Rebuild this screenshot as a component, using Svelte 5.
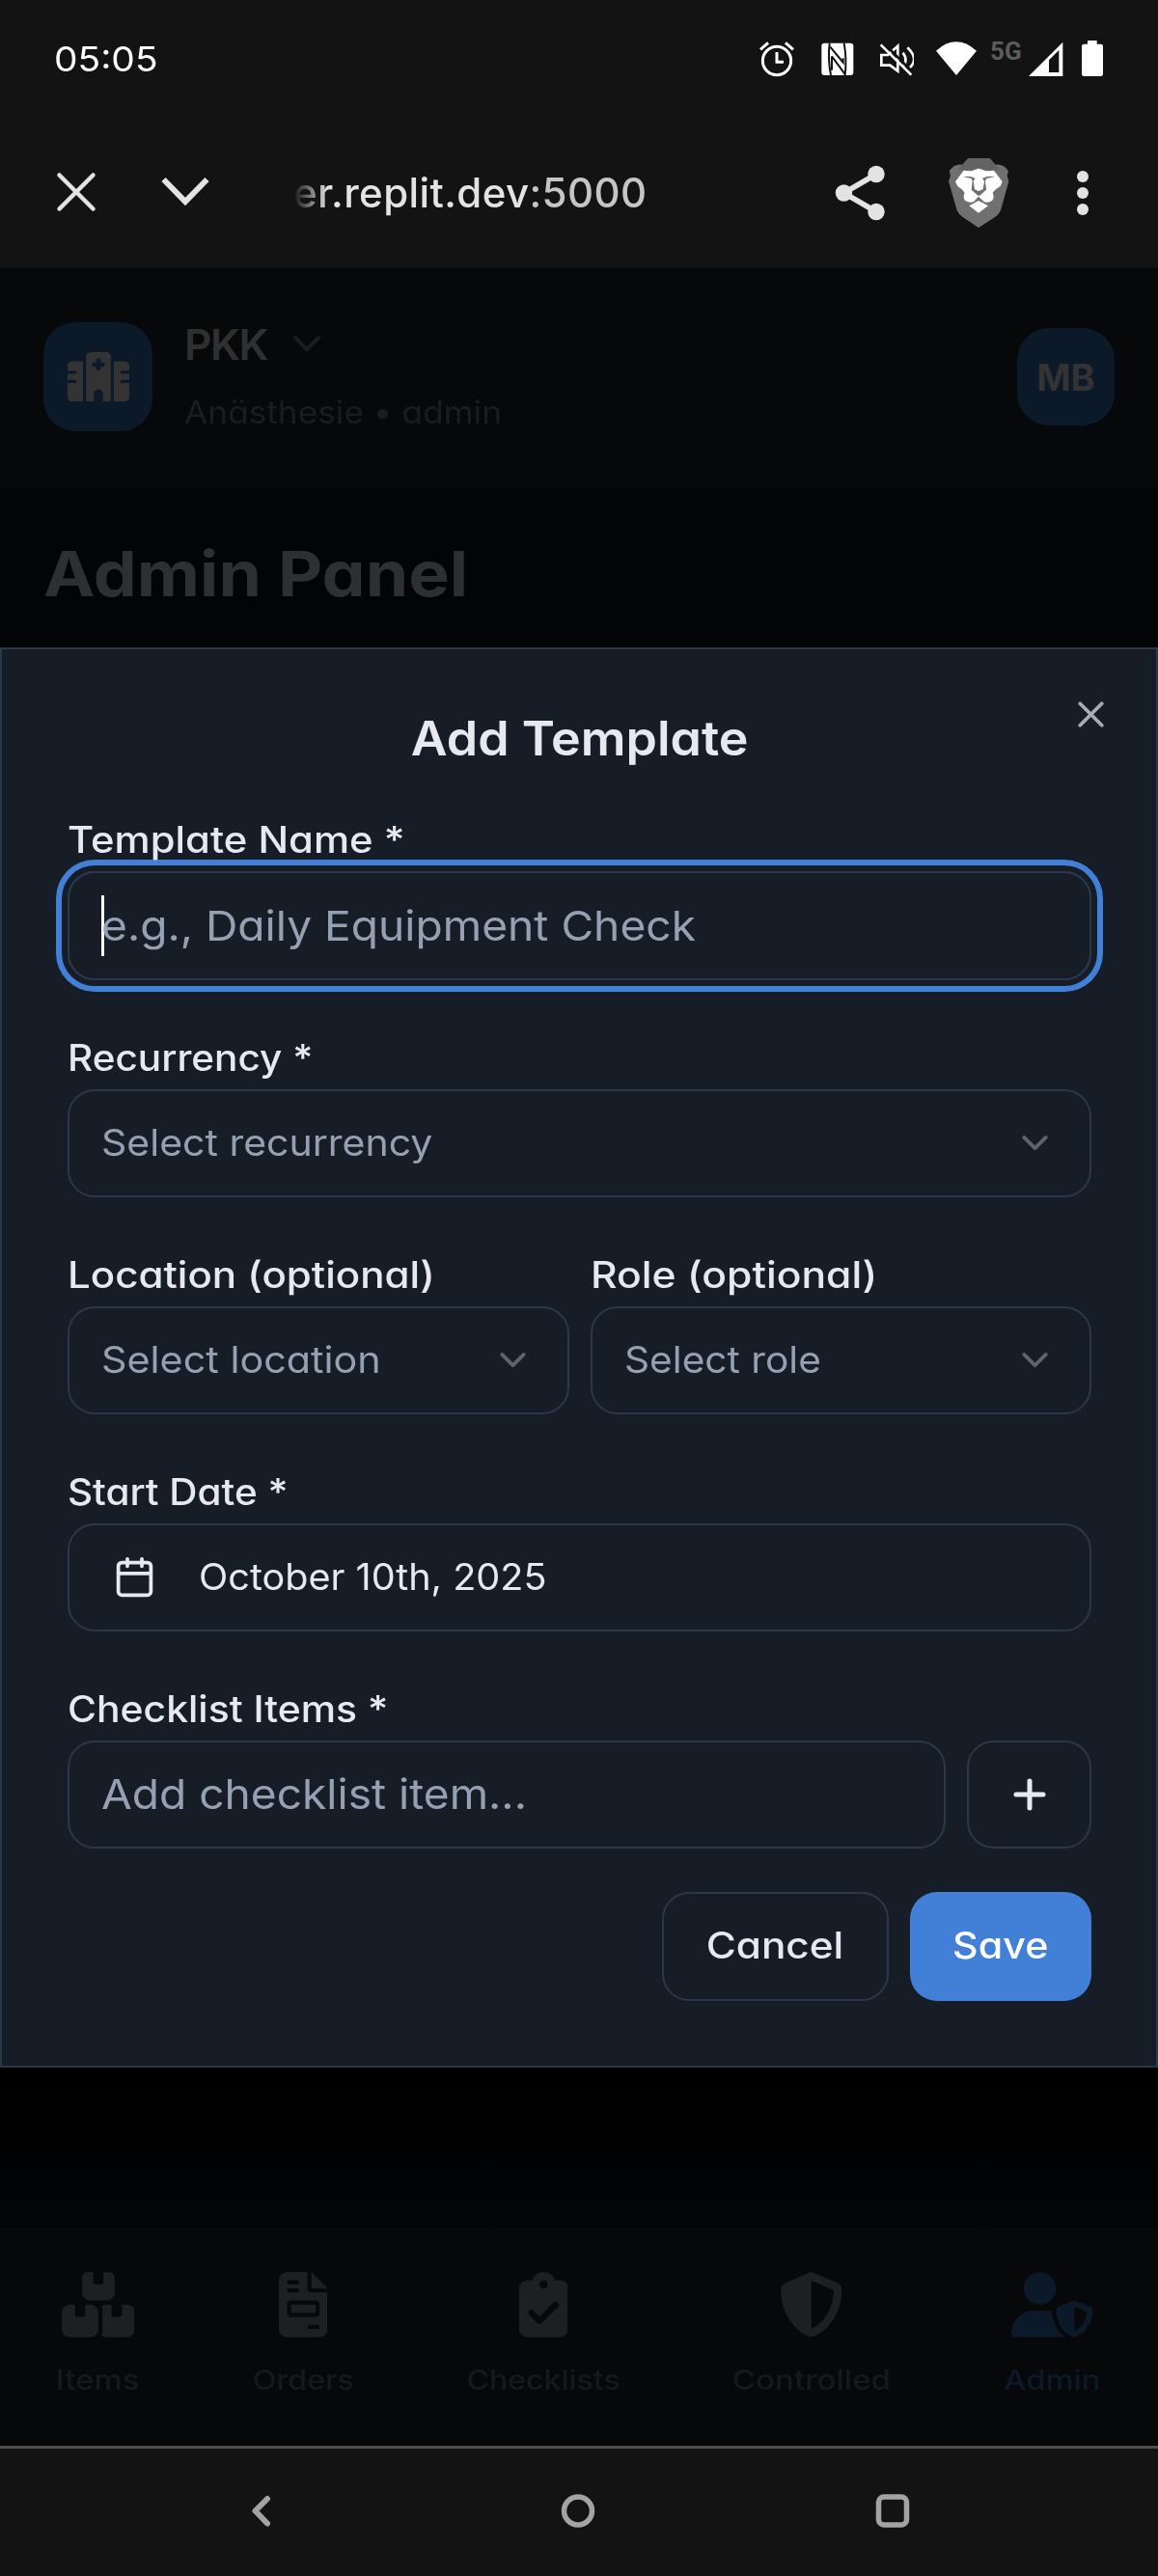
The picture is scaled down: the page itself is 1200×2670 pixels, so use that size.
<script>
  const navItems = [
    {
      label: 'Items', width: 576, span: 84, stretch: 1.135,
      path: 'M248 0H208c-26.5 0-48 21.5-48 48V160c0 35.3 28.7 64 64 64H352c35.3 0 64-28.7 64-64V48c0-26.5-21.5-48-48-48H328V80c0 8.8-7.2 16-16 16H264c-8.8 0-16-7.2-16-16V0zM64 256c-35.3 0-64 28.7-64 64V448c0 35.3 28.7 64 64 64H224c35.3 0 64-28.7 64-64V320c0-35.3-28.7-64-64-64H184v80c0 8.8-7.2 16-16 16H120c-8.8 0-16-7.2-16-16V256H64zM352 512H512c35.3 0 64-28.7 64-64V320c0-35.3-28.7-64-64-64H472v80c0 8.8-7.2 16-16 16H408c-8.8 0-16-7.2-16-16V256H352c-15 0-28.8 5.1-39.7 13.8c4.9 10.4 7.7 22 7.7 34.2V464c0 12.2-2.8 23.8-7.7 34.2C323.2 506.9 337 512 352 512z'
    },
    {
      label: 'Orders', width: 384, span: 103, stretch: 1.11,
      path: 'M64 0C28.7 0 0 28.7 0 64V448c0 35.3 28.7 64 64 64H320c35.3 0 64-28.7 64-64V160H256c-17.7 0-32-14.3-32-32V0H64zM256 0V128H384L256 0zM80 64h64c8.8 0 16 7.2 16 16s-7.2 16-16 16H80c-8.8 0-16-7.2-16-16s7.2-16 16-16zm0 64h64c8.8 0 16 7.2 16 16s-7.2 16-16 16H80c-8.8 0-16-7.2-16-16s7.2-16 16-16zm16 96H288c17.7 0 32 14.3 32 32v64c0 17.7-14.3 32-32 32H96c-17.7 0-32-14.3-32-32V256c0-17.7 14.3-32 32-32zm0 32v64H288V256H96zM240 416h64c8.8 0 16 7.2 16 16s-7.2 16-16 16H240c-8.8 0-16-7.2-16-16s7.2-16 16-16z'
    },
    {
      label: 'Checklists', width: 384, span: 157, stretch: 1.105,
      path: 'M192 0c-41.8 0-77.4 26.7-90.5 64H64C28.7 64 0 92.7 0 128V448c0 35.3 28.7 64 64 64H320c35.3 0 64-28.7 64-64V128c0-35.3-28.7-64-64-64H282.5C269.4 26.7 233.8 0 192 0zm0 64a32 32 0 1 1 0 64 32 32 0 1 1 0-64zM305 273L177 401c-9.4 9.4-24.6 9.4-33.9 0L79 337c-9.4-9.4-9.4-24.6 0-33.9s24.6-9.4 33.9 0l47 47L271 239c9.4-9.4 24.6-9.4 33.9 0s9.4 24.6 0 33.9z'
    },
    {
      label: 'Controlled', width: 512, span: 161, stretch: 1.142,
      path: 'M256 0c4.6 0 9.2 1 13.4 2.9L457.7 82.8c22 9.3 38.4 31 38.3 57.2c-.5 99.2-41.3 280.7-213.6 363.2c-16.7 8-36.1 8-52.8 0C57.3 420.7 16.5 239.2 16 140c-.1-26.2 16.3-47.9 38.3-57.2L242.7 2.9C246.8 1 251.4 0 256 0zm0 66.8V444.8C394 378 431.1 230.1 432 141.4L256 66.8z'
    },
    {
      label: 'Admin', width: 640, span: 100, stretch: 1.13, active: true,
      path: 'M224 256A128 128 0 1 0 224 0a128 128 0 1 0 0 256zm-45.7 48C79.8 304 0 383.8 0 482.3C0 498.7 13.3 512 29.7 512H418.3c1.8 0 3.5-.2 5.3-.5c-76.3-55.1-99.8-141-103.1-200.2c-16.1-4.8-33.1-7.3-50.7-7.3H178.3zm308.8-78.3l-120 48C358 277.4 352 286.2 352 296c0 63.3 25.9 168.8 134.8 214.2c5.9 2.5 12.6 2.5 18.5 0C614.1 464.8 640 359.3 640 296c0-9.8-6-18.6-15.1-22.3l-120-48c-5.7-2.3-12.1-2.3-17.8 0zM591.4 312c-3.9 50.7-27.2 116.7-95.4 149.7V273.8L591.4 312z'
    }
  ];
</script>

<!-- Text widened horizontally by a factor, for the broad geometric look of the typeface -->
{#snippet wide(text, factor)}
  <span class="wide" style:--stretch={factor}>{text}</span>
{/snippet}

{#snippet label(text, factor)}
  <div class="label">{@render wide(text, factor)}</div>
{/snippet}

{#snippet select(text, factor)}
  <div class="control select">
    {@render wide(text, factor)}
    <svg class="lucide dim" viewBox="0 0 24 24"><path d="m6 9 6 6 6-6" /></svg>
  </div>
{/snippet}

<div class="screen">
  <div class="status">
    <span class="time">{@render wide('05:05', 1.08)}</span>
    <svg class="alarm" width="36" height="38" viewBox="141 123 108 114">
      <g fill="none" stroke="#fff" stroke-width="9">
        <circle cx="195" cy="186" r="44" />
        <path d="M195 159V190H216M144 151 168 130M246 151 222 130" />
      </g>
    </svg>
    <svg class="nfc" width="34" height="38" viewBox="331 123 102 114">
      <rect x="332" y="131" width="99" height="100" rx="9" fill="#fff" />
      <path d="M357 131Q351 182 361 231M359 143 399 191V178M364 172 406 229M402 131Q411 182 405 231M364 172V215" fill="none" stroke="#131313" stroke-width="6" />
    </svg>
    <svg class="mute" width="36" height="38" viewBox="511 123 108 114">
      <g fill="none" stroke="#fff" stroke-width="8">
        <path d="M518 168H538L569 140V218L545 200H518ZM585 161Q601 182 587 202M599 145Q636 180 606 208" />
        <path d="M525 131 620 226" stroke="#131313" stroke-width="8" />
        <path d="M516 136 611 230" stroke-width="8" />
      </g>
    </svg>
    <svg class="wifi" width="42" height="38" viewBox="690 123 126 114"><path d="M690 155Q752 99 816 155L753 231Z" fill="#fff" /></svg>
    <span class="net">5G</span>
    <svg class="signal" width="36" height="38" viewBox="977 123 108 114">
      <path d="M977 234 1083 128V234ZM1040 222H1071V153L1040 184Z" fill="#fff" fill-rule="evenodd" />
    </svg>
    <svg class="battery" width="22" height="38" viewBox="1143 123 66 114">
      <rect x="1143" y="134" width="66" height="100" rx="7" fill="#fff" /><rect x="1161" y="123" width="29" height="15" fill="#fff" />
    </svg>
  </div>

  <div class="browser">
    <svg width="44" height="46" viewBox="0 0 44 46"><path d="M4.500 4.500 39.500 39.500M39.500 4.500 4.500 39.500" fill="none" stroke="#e3e3e3" stroke-width="4.500" stroke-linecap="round" /></svg>
    <svg class="down" width="54" height="46" viewBox="0 0 54 46"><path d="M4.500 9 27 32 49.500 9" fill="none" stroke="#e3e3e3" stroke-width="6" /></svg>
    <span class="url">er.replit.dev<span class="port">:5000</span></span>
    <svg width="54" height="60" viewBox="0 0 54 60">
      <g fill="#e3e3e3"><circle cx="43" cy="10.500" r="8.700" /><circle cx="9.500" cy="30" r="8.700" /><circle cx="43" cy="49.500" r="8.700" /></g>
      <path d="M43 10.500 9.500 30 43 49.500" fill="none" stroke="#e3e3e3" stroke-width="5.500" />
    </svg>
    <svg class="brave" width="64" height="74" viewBox="726 487 192 222">
      <path d="M790 490H857L874 510Q900 506 915 530L911 545 916 562 891 652Q886 665 872 674L822 706 774 674Q760 665 755 652L729 562 735 545 731 530Q746 506 772 510Z" fill="#707070" />
      <path d="M790 490H857L874 511 888 524 862 530 822 520 784 530 758 524 772 511Z" fill="#636363" />
      <path d="M776 528 800 530 822 522 845 530 870 528 896 563 890 577Q876 584 866 597 872 612 865 621 850 632 838 624L822 609 808 624Q795 632 780 621 772 612 779 597 770 584 757 577L750 563Z" fill="#fff" />
      <path d="M774 548Q795 542 812 553L806 561 810 587 822 592 836 587 840 561 834 553Q851 542 873 548L846 553 843 562 846 588 826 606H820L800 588 803 562 800 553Z" fill="#707070" />
      <path d="M812 556H834L836 562 834 584 822 592 811 584 808 562Z" fill="#fff" />
      <path d="M793 638 822 622 852 638 822 660Z" fill="#fff" />
    </svg>
    <svg class="dots" width="14" height="48" viewBox="0 0 14 48"><g fill="#e3e3e3"><circle cx="7" cy="7" r="6" /><circle cx="7" cy="24" r="6" /><circle cx="7" cy="41" r="6" /></g></svg>
  </div>

  <header class="top">
    <div class="logo">
      <svg width="64" height="51.200" viewBox="0 0 640 512"><path d="M192 48c0-26.500 21.500-48 48-48H400c26.500 0 48 21.500 48 48V512H368V432c0-26.500-21.500-48-48-48s-48 21.500-48 48v80H192V48zM48 96H160V512H48c-26.500 0-48-21.500-48-48V320H80c8.800 0 16-7.200 16-16s-7.200-16-16-16H0V224H80c8.800 0 16-7.200 16-16s-7.200-16-16-16H0V144c0-26.500 21.500-48 48-48zm544 0c26.500 0 48 21.500 48 48v48H560c-8.800 0-16 7.200-16 16s7.200 16 16 16h80v64H560c-8.800 0-16 7.200-16 16s7.200 16 16 16h80V464c0 26.500-21.500 48-48 48H480V96H592zM312 64c-8.800 0-16 7.200-16 16v24H272c-8.800 0-16 7.200-16 16v16c0 8.800 7.200 16 16 16h24v24c0 8.800 7.200 16 16 16h16c8.800 0 16-7.200 16-16V152h24c8.800 0 16-7.200 16-16V120c0-8.800-7.200-16-16-16H344V80c0-8.800-7.200-16-16-16H312z" fill="#333" fill-rule="evenodd" /></svg>
    </div>
    <div class="org">
      <div class="org-name"><span>PKK</span><svg width="34" height="24" viewBox="0 0 34 24"><path d="m5 5 12 12L29 5" fill="none" stroke="#1b1c20" stroke-width="4" stroke-linecap="round" stroke-linejoin="round" /></svg></div>
      <div class="org-role">{@render wide('Anästhesie • admin', 1.068)}</div>
    </div>
    <div class="avatar">MB</div>
  </header>

  <h1>{@render wide('Admin Panel', 1.1)}</h1>

  <section class="dialog">
    <svg class="lucide close" viewBox="0 0 24 24"><path d="M18 6 6 18M6 6l12 12" /></svg>
    <h2>{@render wide('Add Template', 1.05)}</h2>

    <div class="field">
      {@render label('Template Name *', 1.1)}
      <div class="control input focused"><span class="caret"></span>{@render wide('e.g., Daily Equipment Check', 1.073)}</div>
    </div>

    <div class="field">
      {@render label('Recurrency *', 1.066)}
      {@render select('Select recurrency', 1.079)}
    </div>

    <div class="pair">
      <div class="field">
        {@render label('Location (optional)', 1.107)}
        {@render select('Select location', 1.087)}
      </div>
      <div class="field">
        {@render label('Role (optional)', 1.122)}
        {@render select('Select role', 1.07)}
      </div>
    </div>

    <div class="field">
      {@render label('Start Date *', 1.064)}
      <div class="control date">
        <svg class="lucide" viewBox="0 0 24 24"><path d="M8 2v4M16 2v4M3 10h18" /><rect x="3" y="4" width="18" height="18" rx="2" /></svg>
        {@render wide('October 10th, 2025', 1.042)}
      </div>
    </div>

    <div class="field">
      {@render label('Checklist Items *', 1.076)}
      <div class="add-row">
        <div class="control input">{@render wide('Add checklist item...', 1.072)}</div>
        <div class="control plus"><svg width="36" height="36" viewBox="0 0 36 36"><path d="M18 4V32M4 18H32" fill="none" stroke="#e6e9ef" stroke-width="5" stroke-linecap="round" /></svg></div>
      </div>
    </div>

    <div class="actions">
      <div class="button cancel">{@render wide('Cancel', 1.113)}</div>
      <div class="button save">{@render wide('Save', 1.085)}</div>
    </div>
  </section>

  <div class="gap"></div>

  <nav class="tabs">
    {#each navItems as item}
      <div class="tab" class:active={item.active} style:width="{item.span}px">
        <svg height="67.500" width={item.width * 67.5 / 512} viewBox="0 0 {item.width} 512"><path d={item.path} fill-rule="evenodd" /></svg>
        {@render wide(item.label, item.stretch)}
      </div>
    {/each}
  </nav>

  <div class="system">
    <svg width="36" height="40" viewBox="0 0 36 40"><path d="M24 7 11.500 19.500 24 32.500" fill="none" stroke="#a3a3a3" stroke-width="6" stroke-linecap="round" stroke-linejoin="round" /></svg>
    <svg width="40" height="40" viewBox="0 0 40 40"><circle cx="21" cy="19.500" r="14.500" fill="none" stroke="#a3a3a3" stroke-width="5.500" /></svg>
    <svg width="40" height="40" viewBox="0 0 40 40"><rect x="5.500" y="5" width="29" height="29" rx="5.500" fill="none" stroke="#a3a3a3" stroke-width="5.500" /></svg>
  </div>
</div>

<style>
  :global(body) { background: #030406; }
  .screen { width: 1200px; height: 2670px; overflow: hidden; display: flex; flex-direction: column; background: #030406; font-family: Inter, 'Open Sans', sans-serif; font-feature-settings: 'cv11'; white-space: nowrap; }
  .screen * { box-sizing: border-box; }
  svg { display: block; flex: none; }
  .wide { display: inline-block; transform: scaleX(var(--stretch)); transform-origin: 0 50%; }
  h2 .wide, .button .wide, .tab .wide { transform-origin: 50% 50%; }

  .status { flex: none; height: 121px; padding: 0 57px 0 56px; display: flex; align-items: center; background: #131313; color: #fff; }
  .time { flex: 1; font-size: 36px; }
  .nfc { margin-left: 28px; }
  .mute { margin-left: 26px; }
  .wifi { margin-left: 23px; }
  .net { margin-left: 14px; padding-bottom: 16px; width: 40px; font: 700 26px Roboto, sans-serif; color: #5c5c5c; }
  .battery { margin-left: 19px; }

  .browser { flex: none; height: 157px; padding: 0 71px 0 57px; display: flex; align-items: center; background: #131313; }
  .down { margin-left: 64px; }
  .url { flex: 1; margin-left: 85px; font-size: 42px; font-weight: 500; letter-spacing: 0.4px; color: #e3e3e3; -webkit-mask-image: linear-gradient(90deg, transparent, #000 36px); mask-image: linear-gradient(90deg, transparent, #000 36px); }
  .port { color: #c4c6c5; }
  .brave { margin-left: 63px; }
  .dots { margin-left: 69px; }

  .top { flex: none; height: 227px; padding: 0 45px; display: flex; align-items: center; background: #06080a; border-bottom: 2px solid #090a0c; }
  .logo { width: 113px; height: 113px; border-radius: 33px; display: flex; align-items: center; justify-content: center; background: #0c1929; }
  .org { flex: 1; margin: 3px 0 0 33px; }
  .org-name { display: flex; align-items: center; gap: 24px; height: 71px; color: #2f3032; font-size: 44px; font-weight: 600; letter-spacing: -1.4px; }
  .org-role { height: 71px; line-height: 71px; font-size: 33px; color: #1b1c20; }
  .avatar { width: 101px; height: 101px; border-radius: 33px; background: #0c1929; color: #333; display: flex; align-items: center; justify-content: center; font-size: 38px; font-weight: 700; }

  h1 { flex: none; height: 166px; margin: 0; padding: 49px 0 0 45px; line-height: 81px; font-size: 65px; font-weight: 700; color: #2e2f31; }

  .dialog { flex: none; position: relative; height: 1472px; padding: 62px 67px 0 68px; border: 2px solid #2b3849; background: #171d27; color: #e6e9ef; display: flex; flex-direction: column; }
  h2 { margin: 0 0 56px; text-align: center; line-height: 60px; font-size: 49.5px; font-weight: 600; }
  .lucide { width: 45px; height: 45px; fill: none; stroke: #e6e9ef; stroke-width: 2; stroke-linecap: round; stroke-linejoin: round; }
  .close { position: absolute; top: 45px; right: 45px; opacity: 0.7; }
  .dim { stroke: #5c646f; }

  .field { margin-bottom: 61px; }
  .label { position: relative; z-index: 1; height: 39px; line-height: 39px; margin-bottom: 13px; font-size: 38px; font-weight: 500; }
  .control { height: 112px; border: 2px solid #2b3849; border-radius: 28px; display: flex; align-items: center; font-size: 38px; }
  .select { padding: 0 34px 2px 33px; justify-content: space-between; color: #96a0b3; }
  .input { padding: 0 0 2px 33px; font-size: 43px; color: #96a0b3; }
  .focused { height: 113px; padding-bottom: 1px; box-shadow: 0 0 0 6px #171d27, 0 0 0 12px #4280d8; }
  .caret { width: 3px; height: 63px; margin-right: -3px; background: #fff; }
  .pair { display: grid; grid-template-columns: 1fr 1fr; column-gap: 22px; }
  .date { padding: 0 0 2px 45px; gap: 44px; }
  .add-row { display: grid; grid-template-columns: 1fr 129px; column-gap: 22px; }
  .plus { justify-content: center; padding-bottom: 1px; }
  .add-row .input { min-width: 0; }

  .actions { margin-top: -16px; display: flex; justify-content: flex-end; gap: 22px; }
  .button { height: 113px; padding-bottom: 3px; border-radius: 28px; display: flex; align-items: center; justify-content: center; font-size: 38px; font-weight: 500; }
  .cancel { width: 235px; border: 2px solid #2b3849; }
  .save { width: 188px; background: #4280d8; color: #fff; }

  .gap { flex: none; height: 167px; background: linear-gradient(#000, #030406); }

  .tabs { flex: none; height: 225px; padding-top: 42px; border-top: 3px solid #08090b; background: #06080a; display: flex; justify-content: space-around; }
  .tab { display: flex; flex-direction: column; align-items: center; gap: 24px; fill: #1c2022; color: #17181b; font-size: 29px; font-weight: 500; line-height: 40px; }
  .tab.active { fill: #0c1929; color: #0c1929; }

  .system { flex: none; height: 135px; padding: 0 112px 2px 108px; border-top: 3px solid #4c4c4c; background: #131313; display: grid; grid-template-columns: repeat(3, 1fr); align-items: center; justify-items: center; }
</style>
